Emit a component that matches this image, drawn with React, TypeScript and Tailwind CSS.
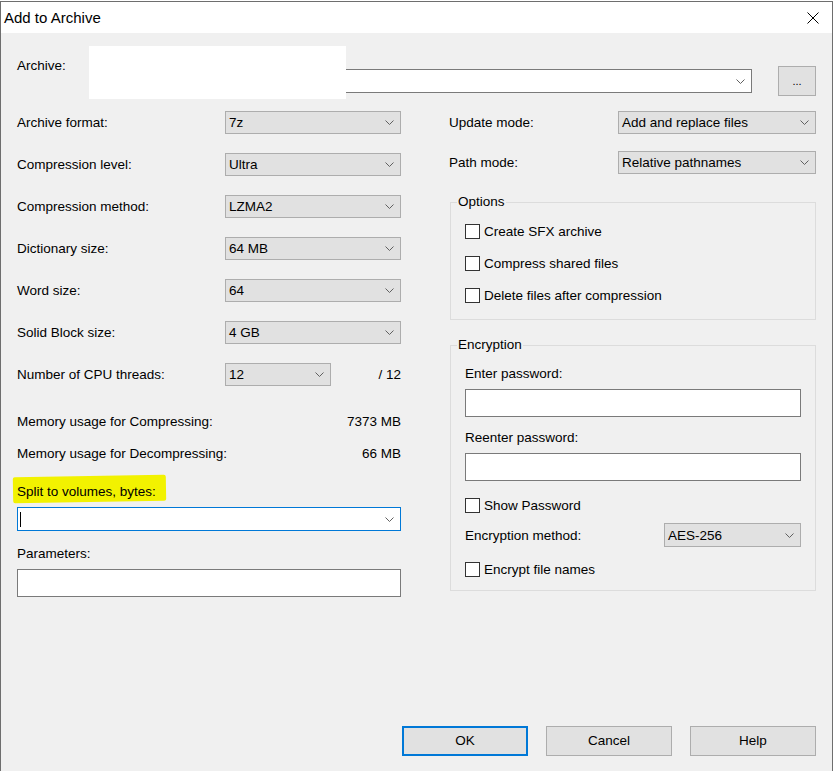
import React from 'react';

const font = { fontFamily: '"Liberation Sans", Arial, sans-serif' };

function Chevron() {
  return (
    <svg width="9" height="5" viewBox="0 0 9 5" className="shrink-0">
      <polyline points="0.5,0.5 4.5,4.5 8.5,0.5" fill="none" stroke="#606060" strokeWidth="1" />
    </svg>
  );
}

function Select({ value, className = '' }: { value: string; className?: string }) {
  return (
    <div className={`flex items-center justify-between border border-[#adadad] bg-[#e1e1e1] pl-[3px] pr-[6px] ${className}`}>
      <span className="pt-px">{value}</span>
      <Chevron />
    </div>
  );
}

function Row({ label, value }: { label: string; value: string }) {
  return (
    <div className="flex h-[23px] items-center">
      <span className="flex-1 pt-px">{label}</span>
      <Select value={value} className="h-[23px] w-[176px]" />
    </div>
  );
}

function Check({ label }: { label: string }) {
  return (
    <div className="flex h-[16px] items-center">
      <div className="h-[15px] w-[15px] border border-[#333333] bg-white" />
      <span className="ml-[4px] pt-px">{label}</span>
    </div>
  );
}

export default function App() {
  return (
    <div className="h-[771px] w-[835px] overflow-hidden bg-white text-[13.5px] leading-[16px] text-black" style={font}>
      <div className="mt-px flex h-[770px] w-[833px] flex-col border-l border-r border-t border-[#6e6e6e]">
        {/* title bar */}
        <div className="flex h-[31px] items-center justify-between bg-white pl-[3px] pr-[13px]">
          <span className="text-[15px]">Add to Archive</span>
          <svg width="12" height="12" viewBox="0 0 12 12">
            <path d="M0.5 0.5 L11.5 11.5 M11.5 0.5 L0.5 11.5" stroke="#000" strokeWidth="1" />
          </svg>
        </div>

        <div className="flex flex-1 flex-col bg-[#f0f0f0] pl-[16px] pr-[16px]">
          {/* archive path */}
          <div className="relative flex items-start">
            <span className="mt-[25px] w-[72px]">Archive:</span>
            <div className="mt-[36px] flex h-[24px] w-[663px] items-center justify-end border border-[#7a7a7a] bg-white pr-[6px]">
              <Chevron />
            </div>
            <div className="ml-[26px] mt-[33px] flex h-[30px] w-[38px] items-center justify-center border border-[#adadad] bg-[#e1e1e1] text-[11px]">
              ...
            </div>
            <div className="absolute left-[72px] top-[13px] h-[53px] w-[257px] bg-white" />
          </div>

          <div className="mt-[15px] flex gap-[48px]">
            {/* left column */}
            <div className="flex w-[384px] flex-col">
              <div className="flex flex-col gap-[19px]">
                <Row label="Archive format:" value="7z" />
                <Row label="Compression level:" value="Ultra" />
                <Row label="Compression method:" value="LZMA2" />
                <Row label="Dictionary size:" value="64 MB" />
                <Row label="Word size:" value="64" />
                <Row label="Solid Block size:" value="4 GB" />
                <div className="flex h-[23px] items-center">
                  <span className="w-[208px] pt-px">Number of CPU threads:</span>
                  <Select value="12" className="h-[23px] w-[106px]" />
                  <span className="flex-1 pt-px text-right">/ 12</span>
                </div>
              </div>

              <div className="mt-[28px] flex justify-between">
                <span>Memory usage for Compressing:</span>
                <span>7373 MB</span>
              </div>
              <div className="mt-[16px] flex justify-between">
                <span>Memory usage for Decompressing:</span>
                <span>66 MB</span>
              </div>

              <div className="relative mt-[22px]">
                <div className="absolute -left-[4px] -top-[8px] h-[26px] w-[153px] -rotate-1 rounded-[2px] bg-[#f2f200]" />
                <span className="relative">Split to volumes, bytes:</span>
              </div>
              <div className="mt-[7px] flex h-[24px] items-center justify-between border border-[#0078d7] bg-white pl-[2px] pr-[6px]">
                <div className="h-[15px] w-px bg-black" />
                <Chevron />
              </div>

              <span className="mt-[15px]">Parameters:</span>
              <div className="mt-[7px] h-[28px] border border-[#7a7a7a] bg-white" />
            </div>

            {/* right column */}
            <div className="flex w-[367px] flex-col">
              <div className="flex h-[23px] items-center">
                <span className="flex-1 pt-px">Update mode:</span>
                <Select value="Add and replace files" className="h-[23px] w-[198px]" />
              </div>
              <div className="mt-[17px] flex h-[23px] items-center">
                <span className="flex-1 pt-px">Path mode:</span>
                <Select value="Relative pathnames" className="h-[23px] w-[198px]" />
              </div>

              <fieldset className="ml-px mt-[20px] flex flex-col gap-[16px] border border-[#dcdcdc] px-[14px] pb-[16px] pt-[13px]">
                <legend className="-ml-[8px] px-[1px]">Options</legend>
                <Check label="Create SFX archive" />
                <Check label="Compress shared files" />
                <Check label="Delete files after compression" />
              </fieldset>

              <fieldset className="ml-px mt-[17px] flex flex-col border border-[#dcdcdc] px-[14px] pb-[13px] pt-[12px]">
                <legend className="-ml-[8px] px-[1px]">Encryption</legend>
                <span className="pt-px">Enter password:</span>
                <div className="mt-[7px] h-[28px] border border-[#7a7a7a] bg-white" />
                <span className="mt-[12px] pt-px">Reenter password:</span>
                <div className="mt-[7px] h-[28px] border border-[#7a7a7a] bg-white" />
                <div className="mt-[16px]">
                  <Check label="Show Password" />
                </div>
                <div className="mt-[10px] flex h-[24px] items-center">
                  <span className="flex-1 pt-px">Encryption method:</span>
                  <Select value="AES-256" className="h-[24px] w-[137px]" />
                </div>
                <div className="mt-[14px]">
                  <Check label="Encrypt file names" />
                </div>
              </fieldset>
            </div>
          </div>

          {/* buttons */}
          <div className="mt-auto flex justify-end gap-[18px] pb-[15px]">
            <button className="h-[30px] w-[126px] border-2 border-[#0078d7] bg-[#e1e1e1]">OK</button>
            <button className="h-[30px] w-[126px] border border-[#adadad] bg-[#e1e1e1]">Cancel</button>
            <button className="h-[30px] w-[126px] border border-[#adadad] bg-[#e1e1e1]">Help</button>
          </div>
        </div>
      </div>
    </div>
  );
}
